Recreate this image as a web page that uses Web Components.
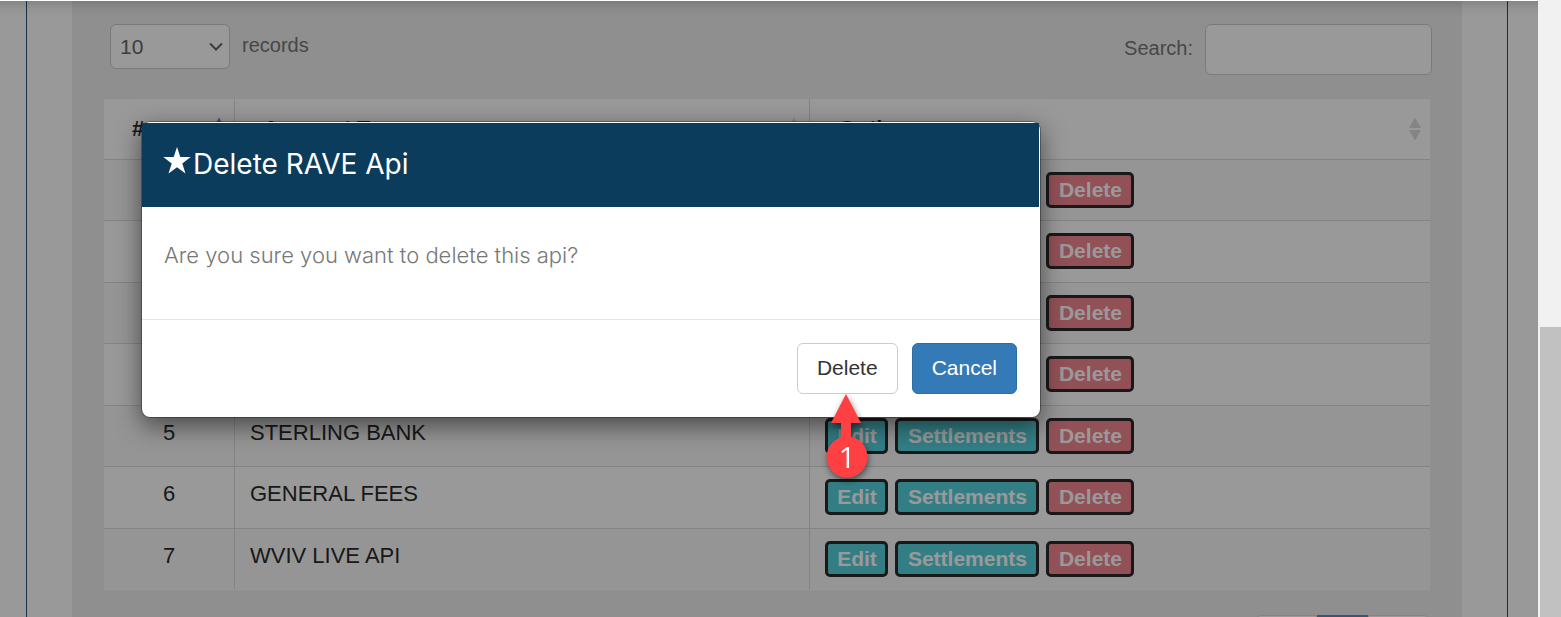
<!DOCTYPE html>
<html lang="en">
<head>
<meta charset="utf-8">
<meta name="viewport" content="width=device-width, initial-scale=1">
<title>Delete RAVE Api</title>
<style>
html, body {
  height: 100%;
}
body {
  margin: 0;
  overflow: hidden;
  background: #fff;
  font-family: "Liberation Sans", Arial, sans-serif;
  font-size: 21px;
  line-height: 30px;
  color: #2b2b2b;
}
</style>
</head>
<body>
<app-shell>
  <records-panel></records-panel>
  <confirm-modal slot="modal">
    <span slot="title">Delete RAVE Api</span>
    <p slot="message">Are you sure you want to delete this api?</p>
    <step-callout slot="hint" number="1"></step-callout>
  </confirm-modal>
</app-shell>

<script>
function makeTemplate(html) {
  const template = document.createElement('template');
  template.innerHTML = html;
  return template;
}

const shellTemplate = makeTemplate(`
<style>
:host {
  display: grid;
  grid-template-columns: minmax(0, 1fr) 23px;
  height: 100vh;
}
.view {
  position: relative;
  overflow: hidden;
  margin-top: 1px;
}
.frame {
  box-sizing: border-box;
  min-height: 100%;
  margin: 0 30px 0 26px;
  padding: 0 45px;
  border-left: 1px solid #24506f;
  border-right: 1px solid #24506f;
}
.backdrop {
  position: absolute;
  inset: 0;
  background: rgba(0, 0, 0, 0.4);
  box-shadow: inset 0 14px 14px -12px rgba(0, 0, 0, 0.2);
}
.scrollbar {
  display: grid;
  grid-template-rows: 53% 1fr;
  background: #f1f1f1;
  padding-left: 2px;
}
.thumb {
  grid-row: 2;
  background: #c1c1c1;
}
</style>
<div class="view">
  <main class="frame"><slot></slot></main>
  <div class="backdrop"><slot name="modal"></slot></div>
</div>
<div class="scrollbar"><div class="thumb"></div></div>
`);

class AppShell extends HTMLElement {
  constructor() {
    super();
    this.attachShadow({ mode: 'open' });
    this.shadowRoot.appendChild(shellTemplate.content.cloneNode(true));
  }
}

const panelTemplate = makeTemplate(`
<style>
:host {
  display: block;
  background: #eee;
  padding: 23px 32px;
}
.toolbar {
  display: flex;
  justify-content: space-between;
  align-items: flex-start;
  height: 51px;
  margin-bottom: 24px;
  padding-left: 6px;
  font-size: 20px;
  color: #777;
}
.length, .search {
  display: flex;
  gap: 12px;
}
.length {
  line-height: 42px;
}
.search {
  line-height: 48px;
  margin-right: -2px;
}
.select {
  display: grid;
  align-items: center;
  width: 120px;
}
select, .select svg {
  grid-area: 1 / 1;
}
.select svg {
  justify-self: end;
  margin-right: 7px;
  pointer-events: none;
}
select, input {
  box-sizing: border-box;
  appearance: none;
  border: 1px solid #ccc;
  border-radius: 6px;
  background: #fff;
  color: #666;
  font: inherit;
  font-size: 21px;
}
select {
  width: 120px;
  height: 45px;
  padding: 0 9px;
}
input {
  width: 227px;
  height: 51px;
  padding: 0 12px;
}
</style>
<div class="toolbar">
  <div class="length">
    <span class="select">
      <select id="length"><option>10</option></select>
      <svg width="14" height="10" viewBox="0 0 14 10"><path d="M1 1.5 7 7.5 13 1.5" fill="none" stroke="#666" stroke-width="2"/></svg>
    </span>
    <label for="length">records</label>
  </div>
  <div class="search">
    <label for="search">Search:</label>
    <input id="search" type="search">
  </div>
</div>
<api-table></api-table>
<page-nav></page-nav>
`);

class RecordsPanel extends HTMLElement {
  constructor() {
    super();
    this.attachShadow({ mode: 'open' });
    this.shadowRoot.appendChild(panelTemplate.content.cloneNode(true));
  }
}

const accounts = ['', '', '', '', 'STERLING BANK', 'GENERAL FEES', 'WVIV LIVE API'];

const sortIcon = (up, down) => `
<svg width="12" height="24" viewBox="0 0 12 24">
  <path d="M0 11 6 0.5 12 11z" fill="${up}"/>
  <path d="M0 13 6 23.5 12 13z" fill="${down}"/>
</svg>`;

class ApiTable extends HTMLElement {
  constructor() {
    super();
    this.attachShadow({ mode: 'open' });
    this.shadowRoot.innerHTML = `
<style>
:host {
  display: block;
}
table {
  width: 100%;
  table-layout: fixed;
  border-collapse: separate;
  border-spacing: 0;
  background: #fff;
}
.col-id { width: 131px; }
.col-name { width: 43.4%; }
th, td {
  box-sizing: border-box;
  border-right: 1px solid #ddd;
  border-bottom: 1px solid #ddd;
  text-align: left;
}
th:last-child, td:last-child {
  border-right: 0;
}
th {
  height: 61px;
  padding: 0 9px 0 28px;
  font-size: 22px;
}
th div {
  display: flex;
  justify-content: space-between;
  align-items: center;
}
td {
  height: 61px;
  padding: 12px 15px 0;
  vertical-align: top;
  font-size: 22px;
}
td:first-child {
  text-align: center;
}
tr:nth-child(even) td {
  height: 62px;
}
tbody tr:nth-child(odd) {
  background: #f9f9f9;
}
tbody tr:last-child td {
  border-bottom-color: #fff;
}
.actions {
  display: grid;
  grid-template-columns: 63px 144px 88px;
  gap: 7px;
}
.actions [kind="danger"] {
  grid-column: 3;
}
</style>
<table>
  <colgroup><col class="col-id"><col class="col-name"><col></colgroup>
  <thead>
    <tr>
      <th scope="col"><div>#${sortIcon('#8080dd', '#eee')}</div></th>
      <th scope="col"><div>Account Type${sortIcon('#ddd', '#ddd')}</div></th>
      <th scope="col"><div>Options${sortIcon('#ddd', '#ddd')}</div></th>
    </tr>
  </thead>
  <tbody>
    ${accounts.map((name, i) => `
    <tr>
      <td>${name ? i + 1 : ''}</td>
      <td>${name}</td>
      <td>
        <div class="actions">
          ${name ? `<action-button>Edit</action-button>
          <action-button>Settlements</action-button>` : ''}
          <action-button kind="danger">Delete</action-button>
        </div>
      </td>
    </tr>`).join('')}
  </tbody>
</table>`;
  }
}

const actionTemplate = makeTemplate(`
<style>
:host {
  display: block;
  --fill: #56d2de;
}
:host([kind="danger"]) {
  --fill: #f48591;
}
button {
  display: block;
  width: 100%;
  height: 36px;
  padding: 0;
  border: 3px solid #2b2b2b;
  border-radius: 5px;
  background: var(--fill);
  color: #fff;
  font: inherit;
  font-size: 21px;
  font-weight: bold;
  line-height: 30px;
  text-align: center;
}
</style>
<button type="button"><slot></slot></button>
`);

class ActionButton extends HTMLElement {
  constructor() {
    super();
    this.attachShadow({ mode: 'open' });
    this.shadowRoot.appendChild(actionTemplate.content.cloneNode(true));
  }
}

const navTemplate = makeTemplate(`
<style>
:host {
  display: flex;
  justify-content: flex-end;
  margin-top: 25px;
}
button {
  width: 62px;
  height: 51px;
  border: 1px solid #ddd;
  background: #fff;
}
.prev { border-radius: 6px 0 0 6px; }
.next { border-radius: 0 6px 6px 0; }
.current {
  width: 51px;
  background: #5993c8;
  border-color: #5993c8;
}
</style>
<button type="button" class="prev" aria-label="Previous"></button>
<button type="button" class="current" aria-label="Page 1"></button>
<button type="button" class="next" aria-label="Next"></button>
`);

class PageNav extends HTMLElement {
  constructor() {
    super();
    this.attachShadow({ mode: 'open' });
    this.shadowRoot.appendChild(navTemplate.content.cloneNode(true));
  }
}

const modalTemplate = makeTemplate(`
<style>
:host {
  display: block;
  box-sizing: border-box;
  width: 900px;
  max-width: 100%;
  margin: 120px 0 0 141px;
  border: 1px solid rgba(0, 0, 0, 0.3);
  border-radius: 9px;
  background: #fff;
  background-clip: padding-box;
  box-shadow: 0 8px 24px rgba(0, 0, 0, 0.5);
}
header {
  display: flex;
  box-sizing: border-box;
  height: 84px;
  margin: 1px 1px 0 0;
  padding: 23px 20px;
  background: #0c3c5c;
  color: #fff;
}
h4 {
  margin: 0;
  font: 28px/36px Inter, "Open Sans", sans-serif;
}
header svg {
  margin-top: 1px;
}
.body {
  height: 112px;
  box-sizing: border-box;
  padding: 33px 22px;
  color: #777;
  font: 300 22px/30px Inter, "Open Sans", sans-serif;
}
::slotted(p) {
  margin: 0;
}
footer {
  display: flex;
  justify-content: flex-end;
  gap: 14px;
  padding: 23px;
  border-top: 1px solid #e5e5e5;
}
.target {
  position: relative;
}
::slotted(step-callout) {
  position: absolute;
  top: 100%;
  left: 50%;
  transform: translateX(-50%);
}
button {
  display: block;
  padding: 9px 19px 11px;
  border: 1px solid #ccc;
  border-radius: 6px;
  background: #fff;
  color: #333;
  font: inherit;
  font-size: 21px;
  line-height: 29px;
}
.primary {
  border-color: #2e6da4;
  background: #337ab7;
  color: #fff;
}
</style>
<header>
  <svg width="31" height="28" viewBox="0 0 31 28"><path d="M15 0 18.3 10.1H28.7L20.3 16.4 23.5 26.5 15 20.3 6.5 26.5 9.7 16.4 1.3 10.1H11.7z" fill="#fff"/></svg>
  <h4><slot name="title"></slot></h4>
</header>
<div class="body"><slot name="message"></slot></div>
<footer>
  <div class="target">
    <button type="button">Delete</button>
    <slot name="hint"></slot>
  </div>
  <button type="button" class="primary">Cancel</button>
</footer>
`);

class ConfirmModal extends HTMLElement {
  constructor() {
    super();
    this.attachShadow({ mode: 'open' });
    this.shadowRoot.appendChild(modalTemplate.content.cloneNode(true));
  }
}

class StepCallout extends HTMLElement {
  connectedCallback() {
    this.attachShadow({ mode: 'open' });
    this.shadowRoot.innerHTML = `
<style>
:host {
  display: block;
}
svg {
  display: block;
  overflow: visible;
  filter: drop-shadow(1px 3px 3px rgba(0, 0, 0, 0.5));
}
text {
  font: 30px "Open Sans", sans-serif;
}
</style>
<svg width="44" height="86" viewBox="0 0 44 86">
  <path d="M21 0 36 29H26V50H16V29H6z" fill="#ff4043"/>
  <circle cx="22" cy="63" r="20.5" fill="#ff4043"/>
  <text x="22" y="74" text-anchor="middle" fill="#fff">${this.getAttribute('number')}</text>
</svg>`;
  }
}

customElements.define('action-button', ActionButton);
customElements.define('api-table', ApiTable);
customElements.define('page-nav', PageNav);
customElements.define('records-panel', RecordsPanel);
customElements.define('step-callout', StepCallout);
customElements.define('confirm-modal', ConfirmModal);
customElements.define('app-shell', AppShell);
</script>
</body>
</html>
